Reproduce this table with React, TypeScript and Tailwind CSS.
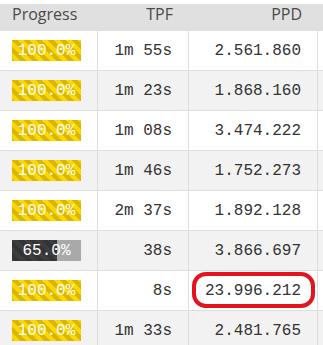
const rows = [
  { progress: 100, tpf: '1m 55s', ppd: '2.561.860' },
  { progress: 100, tpf: '1m 23s', ppd: '1.868.160' },
  { progress: 100, tpf: '1m 08s', ppd: '3.474.222' },
  { progress: 100, tpf: '1m 46s', ppd: '1.752.273' },
  { progress: 100, tpf: '2m 37s', ppd: '1.892.128' },
  { progress: 65, tpf: '38s', ppd: '3.866.697' },
  { progress: 100, tpf: '8s', ppd: '23.996.212', highlight: true },
  { progress: 100, tpf: '1m 33s', ppd: '2.481.765' },
];

const stripes =
  'bg-[linear-gradient(45deg,rgba(0,0,0,0.15)_25%,transparent_25%,transparent_50%,rgba(0,0,0,0.15)_50%,rgba(0,0,0,0.15)_75%,transparent_75%,transparent)] bg-[length:12px_12px]';

const darkStripes =
  'bg-[linear-gradient(45deg,rgba(255,255,255,0.05)_25%,transparent_25%,transparent_50%,rgba(255,255,255,0.05)_50%,rgba(255,255,255,0.05)_75%,transparent_75%,transparent)] bg-[length:12px_12px]';

function ProgressBar({ value }: { value: number }) {
  const done = value >= 100;
  return (
    <div className={`relative h-[21px] w-[69px] overflow-hidden ${done ? 'bg-[#ffd700]' : 'bg-[#a9a9a9]'}`}>
      <div
        className={`absolute inset-y-0 left-0 ${done ? stripes : `bg-[#333333] ${darkStripes}`}`}
        style={{ width: `${value}%` }}
      />
      <span className="relative flex h-full items-center justify-center text-[16px] leading-none text-white">
        {value.toFixed(1)}%
      </span>
    </div>
  );
}

export default function App() {
  return (
    <div className="h-[345px] w-[323px] overflow-hidden bg-white pt-1 font-['Liberation_Mono',monospace] text-[#333]">
      <div className="grid h-[27px] grid-cols-[98px_91px_129px_1fr] bg-[#e0e0e0] font-['Open_Sans',sans-serif] text-[16px] leading-[20px] text-[#4a4a4a]">
        <div className="pl-3">Progress</div>
        <div className="pr-4 text-right">TPF</div>
        <div className="pr-4 text-right">PPD</div>
        <div />
      </div>
      {rows.map((row, i) => (
        <div
          key={i}
          className={`grid h-10 grid-cols-[98px_91px_129px_1fr] border-b border-[#dddddd] ${
            i % 2 === 0 ? 'bg-white' : 'bg-[#f2f2f2]'
          }`}
        >
          <div className="flex items-center border-r border-[#dddddd] pl-3">
            <ProgressBar value={row.progress} />
          </div>
          <div className="flex items-center justify-end border-r border-[#dddddd] pr-4 text-[16px]">
            {row.tpf}
          </div>
          <div className="relative flex items-center justify-end border-r border-[#dddddd] pr-4 text-[16px]">
            {row.ppd}
            {row.highlight && (
              <div className="absolute left-[3px] top-[1px] h-[36px] w-[123px] rounded-[14px] border-4 border-[#e3141d]" />
            )}
          </div>
          <div />
        </div>
      ))}
    </div>
  );
}
